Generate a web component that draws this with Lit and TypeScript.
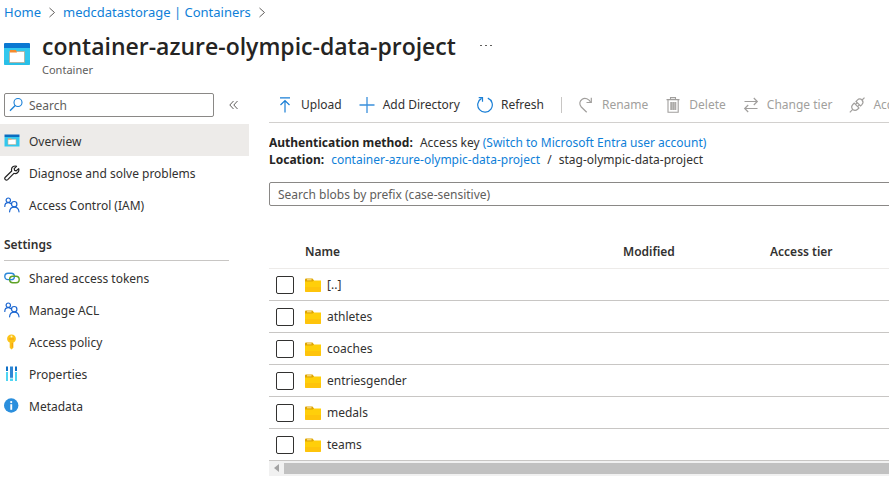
import { LitElement, html, css, svg, TemplateResult } from "lit";
import { customElement, property, state } from "lit/decorators.js";
import { classMap } from "lit/directives/class-map.js";

const containerIcon = svg`
  <path fill="#32c8ee" d="M0 4h26v17a1 1 0 0 1-1 1H1a1 1 0 0 1-1-1z"/>
  <path fill="#1fb5e0" opacity=".5" d="M0 17h26v4a1 1 0 0 1-1 1H1a1 1 0 0 1-1-1z"/>
  <path fill="#0a78d2" d="M1 0h24a1 1 0 0 1 1 1v4H0V1a1 1 0 0 1 1-1z"/>
  <path fill="#fff" stroke="#b9a58a" stroke-width=".7" d="M5.500 8.500h15v11h-15z"/>
  <path fill="#f58a2c" d="M6 7h6l1 2.600H6z"/>`;

const wide = (content: TemplateResult | unknown, box: string, cls: string) =>
  html`<svg class=${cls} viewBox=${box} aria-hidden="true" fill="none">${content}</svg>`;

const people = svg`
  <g stroke="#1b66d1" stroke-width="1.200" stroke-linecap="round">
    <circle cx="4.300" cy="3.200" r="2.200"/>
    <path d="M.8 9.500C.8 7 2.300 5.700 4.300 5.700c1 0 1.700.3 2.200.8"/>
    <circle cx="10.200" cy="7.200" r="2.700"/>
    <path d="M5.600 14.800c.2-3 2-4.700 4.600-4.700s4.500 1.700 4.800 4.700"/>
  </g>`;

const ICONS: Record<string, unknown> = {
  search: svg`<circle cx="9" cy="5.500" r="4" stroke="#1a7fd6" stroke-width="1.100"/><path d="M6.200 8.500 1 13.800" stroke="#1a7fd6" stroke-width="1.300"/>`,
  overview: svg`
    <path fill="#32c8ee" d="M.5 4h15v9.500h-15z"/>
    <path fill="#0a6cc0" d="M.5 1.500h15V4h-15z"/>
    <path fill="#fff" stroke="#c9b394" stroke-width=".6" d="M4 6.300h8v5.200H4z"/>
    <path fill="#f3a867" d="M4 5.500h3.500v1.200H4z"/>`,
  wrench: svg`<path stroke="#222" stroke-width="1.200" stroke-linejoin="round" d="M14.700 3.600 12.300 5.800 10.600 5.300 10.200 3.700 12.500 1.300C10.200.4 7.700 1.900 7.500 4.300c0 .7 0 1.200.2 1.700L1.300 12.200c-1.500 1.700.8 3.800 2.400 2.400L9.900 8.300c2.900 1 5.700-1.600 4.800-4.700z"/>`,
  people,
  links: svg`
    <rect x=".8" y="3.200" width="9.600" height="6.400" rx="3.200" stroke="#2b88d8" stroke-width="1.400"/>
    <rect x="5.600" y="6.300" width="9.600" height="6.400" rx="3.200" stroke="#5ea226" stroke-width="1.400"/>
    <path d="M7.300 9.600h-1.500" stroke="#2b88d8" stroke-width="1.400"/>`,
  key: svg`
    <path fill="#fcc419" d="M7.500 .5c2.600 0 4.400 1.800 4.400 4.200 0 1.800-1 3.200-2.500 3.900v5.200L7.500 15.500l-1.800-1.700V8.600C4.100 7.900 3.100 6.500 3.100 4.700 3.100 2.300 4.900.5 7.500 .5z"/>
    <path stroke="#f59d0c" d="M5 5h5M8.300 9v4.500"/>
    <circle cx="7.500" cy="2.600" r="1" fill="#fff3c4"/>`,
  properties: svg`
    <path fill="#4fd5f2" d="M2 6h2v9H2zM11 6h2v9h-2zM6 12.500h3V15H6z"/>
    <path fill="#0f6fc6" d="M2 .5h2V5H2zM11 .5h2V5h-2z"/>
    <path fill="#2f86d4" d="M6 .5h3v11.300H6z"/>`,
  info: svg`
    <circle cx="7.200" cy="7.500" r="7.200" fill="#2b8fdd"/>
    <path fill="#fff" d="M6.300 6.200h1.900v5.600H6.300z"/><circle cx="7.200" cy="4.100" r="1.100" fill="#fff"/>`,
  upload: svg`<g stroke="#1a7fd6" stroke-width="1.200"><path d="M3 .8h10M8 15.500V3.500M3.500 8 8 3.500 12.500 8"/></g>`,
  plus: svg`<path stroke="#3a90dc" stroke-width="1.300" d="M8 0v16M.5 8h15"/>`,
  refresh: svg`<g stroke="#1a7fd6" stroke-width="1.200"><path d="M10.800 1.100A7.300 7.300 0 1 1 4.600 1.400"/><path d="M1.700 .7h3.800v4"/></g>`,
  rename: svg`<g stroke="#a19f9d" stroke-width="1.200"><path d="M12.700 5.300C11 1.800 7 .4 4.200 2.200 1.400 4 1 7.300 3.300 10l5.400 5.300"/><path d="M13.300 .8v4.700H8.500"/></g>`,
  trash: svg`
    <path fill="#d0cecc" d="M5 5h6.500v8H5z"/>
    <g stroke="#a19f9d" stroke-width="1.100"><path d="M1.500 2.600h13M5.500 2.500V.6h5v1.900M3 2.800v12.500h10.200V2.800M6.200 5v8M8.200 5v8M10.200 5v8"/></g>`,
  swap: svg`<g stroke="#a19f9d" stroke-width="1.200"><path d="M1.500 4.500H14M10.800 1 14.300 4.500 10.800 8M14.500 11.500H2M5.200 8 1.700 11.500 5.200 15"/></g>`,
  plug: svg`<g stroke="#a19f9d" stroke-width="1.200"><path d="M.8 15.300 3.500 12.600M12.600 3.500 15.500 .6M5.200 6.200l4.700 4.700-1.300 1.300c-1.400 1.300-3.400 1.500-4.900.2-1.300-1.500-1.200-3.500.2-4.900zM7 4.500 11.600 9l1.300-1.300c1.300-1.400 1.400-3.300.1-4.700-1.400-1.300-3.300-1.200-4.700.1zM6.500 7.500 8.300 5.700M8.600 9.600l1.800-1.800"/></g>`,
  collapse: svg`<path stroke="#605e5c" d="M7.500 4 3.800 8l3.700 4M11.500 4 7.800 8l3.700 4"/>`,
  chevron: svg`<path stroke="#605e5c" d="m5.500 4 5 4.500-5 4.500"/>`,
  dots: svg`<path fill="#605e5c" d="M2 7h2v1H2zM7 7h2v1H7zM12 7h2v1h-2z"/>`,
  folder: svg`
    <path fill="#dfa500" d="M0 2.500a1 1 0 0 1 1-1h6.500L9 3.500V7H0z"/>
    <path fill="#ffe9a6" d="M2 2.300h4.500v1H2z"/>
    <path fill="#ffcf0a" d="M0 4.500h7.500L9 3.500h7V14a1 1 0 0 1-1 1H1a1 1 0 0 1-1-1z"/>
    <path fill="#fdbf0c" opacity=".7" d="M0 10h16v4a1 1 0 0 1-1 1H1a1 1 0 0 1-1-1z"/>`,
};

@customElement("az-icon")
export class AzIcon extends LitElement {
  static styles = css`
    :host { display: block; flex: none; width: 16px; height: 16px; }
    .glyph { display: block; width: 16px; height: 16px; }
  `;
  @property() name = "";
  render() {
    return wide(ICONS[this.name], "0 0 16 16", "glyph");
  }
}

interface NavItem { icon: string; label: string; }

const GENERAL: NavItem[] = [
  { icon: "overview", label: "Overview" },
  { icon: "wrench", label: "Diagnose and solve problems" },
  { icon: "people", label: "Access Control (IAM)" },
];

const SETTINGS: NavItem[] = [
  { icon: "links", label: "Shared access tokens" },
  { icon: "people", label: "Manage ACL" },
  { icon: "key", label: "Access policy" },
  { icon: "properties", label: "Properties" },
  { icon: "info", label: "Metadata" },
];

const FOLDERS = ["[..]", "athletes", "coaches", "entriesgender", "medals", "teams"];

@customElement("app-root")
export class AppRoot extends LitElement {
  static styles = css`
    :host {
      display: block;
      overflow: hidden;
      background: #fff;
      color: #323130;
      font: 12px/17px "Noto Sans", "Open Sans", sans-serif;
    }
    * { box-sizing: border-box; }
    a { color: #0f7fd8; text-decoration: none; }
    button { font: inherit; color: inherit; background: none; border: 0; padding: 0; white-space: nowrap; }
    .crumbs { display: flex; align-items: center; gap: 3px; height: 24px; padding-left: 4px; font-size: 13px; white-space: nowrap; }
    .head { display: flex; gap: 12px; height: 68px; padding: 7px 4px 0; }
    .logo { flex: none; width: 26px; height: 22px; margin-top: 12px; }
    .title-row { display: flex; align-items: center; gap: 22px; }
    h1 { margin: 0; font-family: "Open Sans", "Noto Sans", sans-serif; font-size: 23px; line-height: 30px; font-weight: 600; color: #252423; white-space: nowrap; }
    .kind { font-size: 11px; line-height: 18px; color: #605e5c; }
    .body { display: flex; align-items: flex-start; }
    .side { flex: none; width: 249px; }
    .find { display: flex; align-items: center; gap: 12px; padding: 1px 8px 0 4px; height: 25px; }
    .box { display: flex; align-items: center; border: 1px solid #8a8886; border-radius: 2px; height: 24px; background: #fff; }
    .find .box { flex: none; width: 210px; padding-left: 4px; gap: 4px; }
    input[type="text"] { flex: 1; min-width: 0; border: 0; outline: 0; padding: 0; font: inherit; color: inherit; background: none; }
    input::placeholder { color: #605e5c; opacity: 1; }
    .nav { margin: 0; padding: 0; list-style: none; }
    .first { margin-top: 7px; }
    .item { display: flex; align-items: center; gap: 9px; height: 32px; padding: 2px 0 0 4px; color: #323130; white-space: nowrap; }
    .on { background: #edebe9; }
    h2 { margin: 13px 20px 0 4px; height: 28px; border-bottom: 1px solid #c8c6c4; font-size: 12px; line-height: 24px; font-weight: 600; }
    .main { flex: 1; min-width: 0; margin-left: 20px; overflow: hidden; }
    .tools { display: flex; align-items: center; height: 31px; padding-bottom: 5px; border-bottom: 1px solid #d2d0ce; }
    .tool { display: flex; flex: none; align-items: center; gap: 8px; padding: 0 9px 0 8px; }
    .tool:disabled { color: #a19f9d; }
    .sep { flex: none; width: 1px; height: 16px; margin: 0 8px; background: #c8c6c4; }
    .facts { margin: 11px 0 14px; white-space: nowrap; }
    .facts p { margin: 0; }
    .facts b { font-weight: 700; color: #252423; margin-right: 4px; }
    .slash { margin: 0 4px; }
    .main .box { margin-right: -8px; padding-left: 8px; }
    table { width: 100%; margin-top: 28px; border-collapse: collapse; table-layout: fixed; }
    th { height: 34px; padding: 1px 0 0; text-align: left; font-weight: 600; border-bottom: 1px solid #edebe9; white-space: nowrap; }
    td { height: 32px; padding: 1px 0 0; border-bottom: 1px solid #c8c6c4; }
    .c-tick { width: 36px; }
    .c-name { width: 318px; }
    .c-mod { width: 147px; }
    .tick { display: block; appearance: none; width: 18px; height: 18px; margin: 0 0 0 7px; border: 1px solid #323130; border-radius: 2px; background: #fff; }
    .tick:checked { background: #0078d4; }
    .name { display: flex; align-items: center; gap: 6px; line-height: 18px; color: #323130; }
    .scroll { display: flex; align-items: center; height: 15px; background: #f1f1f1; }
    .arrow { width: 15px; height: 15px; display: grid; place-items: center; }
    .arrow svg { width: 5px; height: 8px; }
    .thumb { flex: 1; height: 11px; background: #c1c1c1; }
  `;

  @state() private active = "Overview";

  private nav(items: NavItem[], first: boolean) {
    return html`<ul class=${classMap({ nav: true, first })}>
      ${items.map(
        (i) => html`<li><a href="#" class=${classMap({ item: true, on: i.label === this.active })}
          @click=${(e: Event) => { e.preventDefault(); this.active = i.label; }}
          ><az-icon name=${i.icon}></az-icon><span>${i.label}</span></a></li>`
      )}
    </ul>`;
  }

  private tool(icon: string, label: string, disabled = false) {
    return html`<button class="tool" ?disabled=${disabled}><az-icon name=${icon}></az-icon><span>${label}</span></button>`;
  }

  render() {
    return html`
      <nav class="crumbs" aria-label="Breadcrumb">
        <a href="#">Home</a><az-icon name="chevron"></az-icon>
        <a href="#">medcdatastorage | Containers</a><az-icon name="chevron"></az-icon>
      </nav>
      <header class="head">
        ${wide(containerIcon, "0 0 26 22", "logo")}
        <div>
          <div class="title-row">
            <h1>container-azure-olympic-data-project</h1>
            <button aria-label="More actions"><az-icon name="dots"></az-icon></button>
          </div>
          <div class="kind">Container</div>
        </div>
      </header>
      <div class="body">
        <aside class="side">
          <div class="find">
            <label class="box"><az-icon name="search"></az-icon><input type="text" placeholder="Search" aria-label="Search" /></label>
            <button aria-label="Collapse menu"><az-icon name="collapse"></az-icon></button>
          </div>
          ${this.nav(GENERAL, true)}
          <h2>Settings</h2>
          ${this.nav(SETTINGS, false)}
        </aside>
        <main class="main">
          <div class="tools">
            ${this.tool("upload", "Upload")}${this.tool("plus", "Add Directory")}${this.tool("refresh", "Refresh")}
            <span class="sep"></span>
            ${this.tool("rename", "Rename", true)}${this.tool("trash", "Delete", true)}${this.tool("swap", "Change tier", true)}${this.tool("plug", "Acquire lease", true)}
          </div>
          <div class="facts">
            <p><b>Authentication method:</b> Access key <a href="#">(Switch to Microsoft Entra user account)</a></p>
            <p><b>Location:</b> <a href="#">container-azure-olympic-data-project</a> <span class="slash">/</span> stag-olympic-data-project</p>
          </div>
          <label class="box"><input type="text" placeholder="Search blobs by prefix (case-sensitive)" aria-label="Search blobs by prefix" /></label>
          <table>
            <thead>
              <tr><th class="c-tick"></th><th class="c-name">Name</th><th class="c-mod">Modified</th><th>Access tier</th></tr>
            </thead>
            <tbody>
              ${FOLDERS.map(
                (f) => html`<tr>
                  <td><input class="tick" type="checkbox" aria-label="Select ${f}" /></td>
                  <td><a class="name" href="#"><az-icon name="folder"></az-icon><span>${f}</span></a></td>
                  <td></td><td></td>
                </tr>`
              )}
            </tbody>
          </table>
          <div class="scroll">
            <span class="arrow"><svg viewBox="0 0 5 8" aria-hidden="true"><path fill="#a3a3a3" d="M5 0v8L0 4z"/></svg></span>
            <span class="thumb"></span>
          </div>
        </main>
      </div>
    `;
  }
}
